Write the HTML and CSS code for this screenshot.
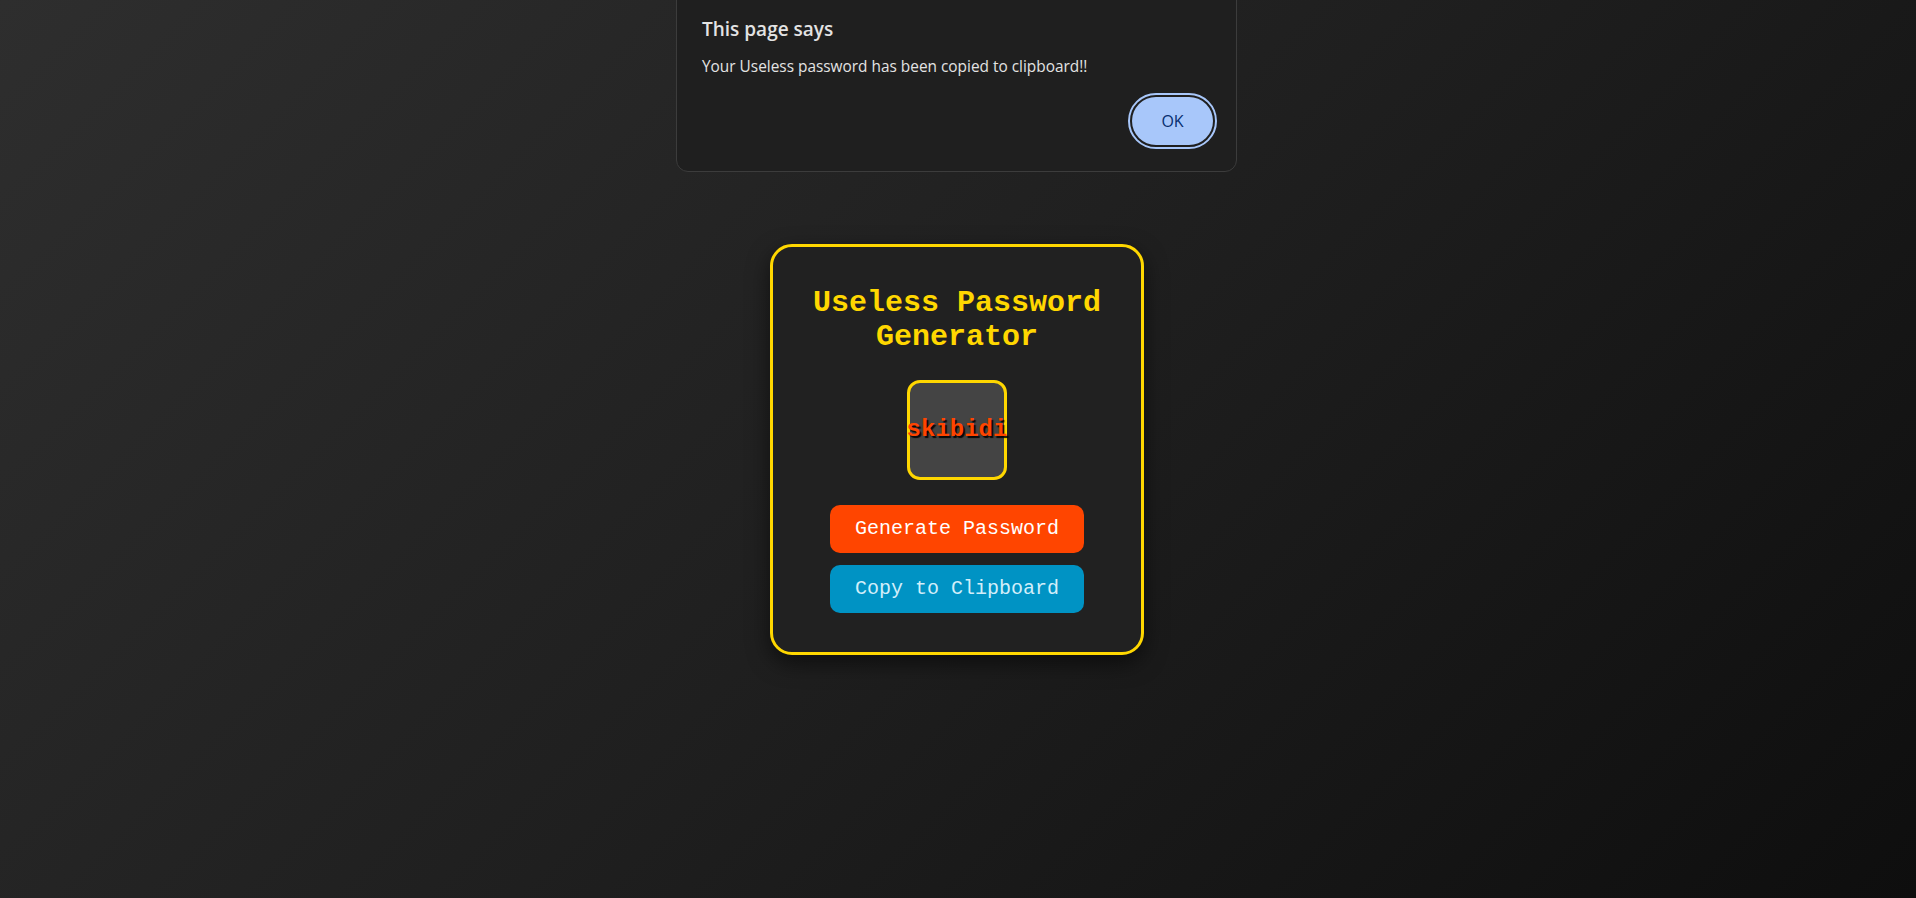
FILE: index.html
```html
<!DOCTYPE html>
<html lang="en">
<head>
<meta charset="utf-8">
<title>Useless Password Generator</title>
<link rel="stylesheet" href="styles.css">
</head>
<body>
  <div class="dialog">
    <div class="dialog-title">This page says</div>
    <div class="dialog-msg">Your Useless password has been copied to clipboard!!</div>
    <div class="dialog-actions"><button class="ok-btn">OK</button></div>
  </div>

  <main class="card">
    <h1 class="title">Useless Password Generator</h1>
    <div class="pw-box"><span class="pw-text">skibidi</span></div>
    <button class="btn btn-generate">Generate Password</button>
    <button class="btn btn-copy">Copy to Clipboard</button>
  </main>
</body>
</html>
```

FILE: styles.css
```css
html, body {
  margin: 0;
  padding: 0;
}

body {
  min-height: 100vh;
  display: flex;
  align-items: center;
  justify-content: center;
  background: linear-gradient(135deg, #2e2e2e 0%, #1f1f1f 50%, #0e0e0e 100%);
  font-family: "Liberation Mono", "Courier New", monospace;
}

.card {
  width: 374px;
  box-sizing: border-box;
  border: 3px solid #ffd700;
  border-radius: 22px;
  background: #212121;
  padding: 39px 20px 39px;
  margin-right: 2px;
  display: flex;
  flex-direction: column;
  align-items: center;
  box-shadow: 0 8px 22px rgba(0, 0, 0, 0.55);
}

.title {
  margin: 0 0 26px;
  font-size: 30px;
  line-height: 34px;
  font-weight: bold;
  color: #ffd700;
  text-align: center;
}

.pw-box {
  width: 100px;
  height: 100px;
  box-sizing: border-box;
  border: 3px solid #ffd700;
  border-radius: 13px;
  background: #444444;
  display: flex;
  align-items: center;
  justify-content: center;
  margin-bottom: 25px;
}

.pw-text {
  font-size: 24px;
  font-weight: bold;
  color: #ff4500;
  white-space: nowrap;
  text-shadow: 2px 2px 1px rgba(0, 0, 0, 0.9);
}

.btn {
  width: 254px;
  height: 48px;
  border: none;
  border-radius: 10px;
  font-family: "Liberation Mono", "Courier New", monospace;
  font-size: 20px;
  padding: 0;
  cursor: pointer;
}

.btn-generate {
  background: #ff4500;
  color: #ffffff;
  margin-bottom: 12px;
}

.btn-copy {
  background: #0093c4;
  color: #d2eefa;
}

/* Browser alert overlay */
.dialog {
  position: fixed;
  top: -14px;
  left: 676px;
  width: 561px;
  box-sizing: border-box;
  background: #1f1f1f;
  border: 1px solid #3c3c3c;
  border-radius: 12px;
  padding: 30px 23px 26px 25px;
  font-family: "Open Sans", "Noto Sans", sans-serif;
  color: #e8e8e8;
}

.dialog-title {
  font-size: 19px;
  font-weight: 600;
  line-height: 25px;
  color: #e3e3e3;
}

.dialog-msg {
  margin-top: 15px;
  font-size: 15.4px;
  line-height: 20px;
  color: #e3e3e3;
}

.dialog-actions {
  display: flex;
  justify-content: flex-end;
  margin-top: 20px;
}

.ok-btn {
  width: 81px;
  height: 48px;
  border: none;
  border-radius: 24px;
  background: #a8c7fa;
  color: #062e6f;
  font-family: "Open Sans", "Noto Sans", sans-serif;
  font-size: 16px;
  font-weight: 500;
  outline: 2px solid #a8c7fa;
  outline-offset: 2px;
  padding: 0;
}
```
